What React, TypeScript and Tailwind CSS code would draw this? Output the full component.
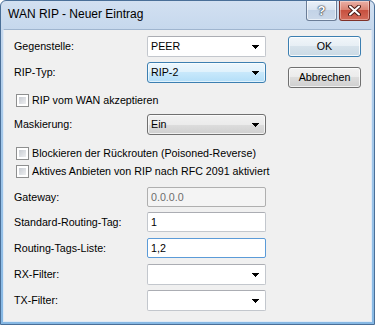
import React from 'react';

type ComboKind = 'edit' | 'focus' | 'button';

const comboStyle: Record<ComboKind, string> = {
  edit: 'bg-white border-[#c3c7cd] border-t-[#abadb3] rounded-[2px]',
  focus:
    'border-[#3c7fb1] rounded-[3px] bg-[linear-gradient(to_bottom,#edf7fd_0%,#dff1fc_50%,#c8e8fb_50%,#b3def8_100%)] shadow-[inset_0_0_0_1px_rgba(255,255,255,0.6)]',
  button:
    'border-[#707070] rounded-[3px] bg-[linear-gradient(to_bottom,#f2f2f2_0%,#ebebeb_50%,#dddddd_50%,#cfcfcf_100%)] shadow-[inset_0_0_0_1px_rgba(255,255,255,0.7)]',
};

const Arrow = () => (
  <svg width="7" height="4" viewBox="0 0 7 4" shapeRendering="crispEdges">
    <path d="M0 0H7V1H6V2H5V3H4V4H3V3H2V2H1V1H0Z" fill="#000" />
  </svg>
);

const Combo: React.FC<{ value?: string; kind?: ComboKind }> = ({ value = '', kind = 'edit' }) => (
  <div className={`flex h-[21px] w-[119px] shrink-0 items-center justify-between border pl-[3px] pr-[6px] ${comboStyle[kind]}`}>
    <span>{value}</span>
    <Arrow />
  </div>
);

const TextBox: React.FC<{ value: string; disabled?: boolean; focused?: boolean }> = ({ value, disabled, focused }) => {
  let cls = 'bg-white border-[#c3c7cd] border-t-[#abadb3]';
  if (disabled) cls = 'bg-[#f4f4f4] border-[#afafaf] text-[#6d6d6d]';
  if (focused) cls = 'bg-white border-[#5b9bd8]';
  return (
    <div className={`flex h-[20px] w-[119px] shrink-0 items-center rounded-[2px] border pl-[3px] ${cls}`}>
      {value}
    </div>
  );
};

const Row: React.FC<{ label: string; className?: string; children: React.ReactNode }> = ({ label, className = '', children }) => (
  <div className={`flex items-center ${className}`}>
    <div className="w-[133px] shrink-0">{label}</div>
    {children}
  </div>
);

const Check: React.FC<{ label: string; className?: string }> = ({ label, className = '' }) => (
  <div className={`flex h-[13px] items-center gap-[3px] whitespace-nowrap pl-[2px] ${className}`}>
    <div className="h-[13px] w-[13px] shrink-0 border border-[#8e8f8f] bg-white p-[2px]">
      <div className="h-full w-full bg-[linear-gradient(135deg,#c8ccd2,#eeeff1)]" />
    </div>
    <span>{label}</span>
  </div>
);

const DlgButton: React.FC<{ label: string; isDefault?: boolean; className?: string }> = ({ label, isDefault, className = '' }) => (
  <div
    className={`flex h-[21px] w-[73px] items-center justify-center rounded-[3px] border ${
      isDefault
        ? 'border-[#3c7fb1] bg-[linear-gradient(to_bottom,#f1f6fa_0%,#e6eef4_50%,#d6e2eb_50%,#cbdae5_100%)] shadow-[inset_0_0_0_1px_rgba(255,255,255,0.8)]'
        : 'border-[#707070] bg-[linear-gradient(to_bottom,#f2f2f2_0%,#ebebeb_50%,#dddddd_50%,#cfcfcf_100%)] shadow-[inset_0_0_0_1px_rgba(255,255,255,0.7)]'
    } ${className}`}
  >
    {label}
  </div>
);

export default function App() {
  return (
    <div className="flex h-[325px] w-[375px] flex-col overflow-hidden rounded-t-[6px] border border-[#4a6f98] bg-[linear-gradient(to_bottom,#d2e0f1_0px,#c6d8ed_28px,#a6c9ea_120px,#86b8e4_100%)] text-[10.7px] leading-[13px] text-black font-[family-name:'Liberation_Sans',Arial,sans-serif]">
      {/* title bar */}
      <div className="flex h-[28px] shrink-0 items-start justify-between pl-[7px] pr-[4px]">
        <div className="self-center pb-[1px] text-[12px] text-black">WAN RIP - Neuer Eintrag</div>
        <div className="flex gap-[2px]">
          <div className="flex h-[20px] w-[31px] items-center justify-center rounded-b-[3px] border border-t-0 border-[#6b7d97] bg-[linear-gradient(to_bottom,#eaf1f9_0%,#d8e3f0_50%,#c3d3e7_50%,#cbd9ea_100%)] shadow-[inset_0_0_0_1px_rgba(255,255,255,0.6)]">
            <span className="text-[13px] font-bold leading-none text-white [text-shadow:0_0_1px_#2d3846,0_0_1px_#2d3846,0_0_2px_#2d3846]">?</span>
          </div>
          <div className="flex h-[20px] w-[31px] items-center justify-center rounded-b-[3px] border border-t-0 border-[#7f3129] bg-[linear-gradient(to_bottom,#eab0a6_0%,#d9806f_50%,#c7503f_50%,#d36c5b_100%)] shadow-[inset_0_0_0_1px_rgba(255,255,255,0.35)]">
            <svg width="13" height="11" viewBox="0 0 13 11">
              <path d="M2 1.5L11 9.5M11 1.5L2 9.5" stroke="#4a1c17" strokeWidth="4" strokeLinecap="round" />
              <path d="M2 1.5L11 9.5M11 1.5L2 9.5" stroke="#fff" strokeWidth="2" strokeLinecap="round" />
            </svg>
          </div>
        </div>
      </div>

      {/* client area */}
      <div className="mx-[2px] mb-[2px] flex flex-1 border border-[#dfe9f5] border-t-[#9fb5cf] bg-[#f0f0f0]">
        <div className="flex w-[262px] shrink-0 flex-col pl-[10px] pt-[6px]">
          <Row label="Gegenstelle:">
            <Combo value="PEER" />
          </Row>
          <Row label="RIP-Typ:" className="mt-[5px]">
            <Combo value="RIP-2" kind="focus" />
          </Row>
          <Check label="RIP vom WAN akzeptieren" className="mt-[11px]" />
          <Row label="Maskierung:" className="mt-[7px]">
            <Combo value="Ein" kind="button" />
          </Row>
          <Check label="Blockieren der Rückrouten (Poisoned-Reverse)" className="mt-[12px]" />
          <Check label="Aktives Anbieten von RIP nach RFC 2091 aktiviert" className="mt-[5px]" />
          <Row label="Gateway:" className="mt-[9px]">
            <TextBox value="0.0.0.0" disabled />
          </Row>
          <Row label="Standard-Routing-Tag:" className="mt-[5px]">
            <TextBox value="1" />
          </Row>
          <Row label="Routing-Tags-Liste:" className="mt-[6px]">
            <TextBox value="1,2" focused />
          </Row>
          <Row label="RX-Filter:" className="mt-[6px]">
            <Combo />
          </Row>
          <Row label="TX-Filter:" className="mt-[5px]">
            <Combo />
          </Row>
        </div>
        <div className="ml-[22px] flex flex-col pt-[6px]">
          <DlgButton label="OK" isDefault />
          <DlgButton label="Abbrechen" className="mt-[10px]" />
        </div>
      </div>
    </div>
  );
}
